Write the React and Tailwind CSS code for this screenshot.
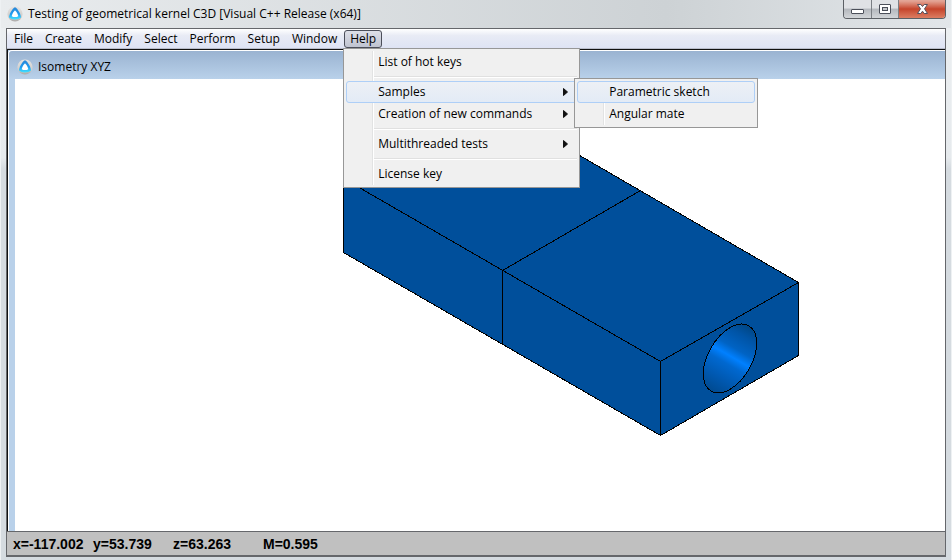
import React from "react";

const menus = ["File", "Create", "Modify", "Select", "Perform", "Setup", "Window"];

const helpGroups = [
    [{ label: "List of hot keys" }],
    [
        {
            label: "Samples",
            active: true,
            children: [{ label: "Parametric sketch", active: true }, { label: "Angular mate" }],
        },
        { label: "Creation of new commands", arrow: true },
    ],
    [{ label: "Multithreaded tests", arrow: true }],
    [{ label: "License key" }],
];

function Logo({ id }) {
    return (
        <svg width="16" height="16" viewBox="0 0 16 16" className="shrink-0">
            <defs>
                <linearGradient id={`${id}-disc`} x1="0" y1="0" x2="0" y2="1">
                    <stop offset="0" stopColor="#e6e4e2" />
                    <stop offset="0.7" stopColor="#cfcdcb" />
                    <stop offset="1" stopColor="#a9a7a6" />
                </linearGradient>
                <linearGradient id={`${id}-tri`} x1="0" y1="0" x2="0" y2="1">
                    <stop offset="0" stopColor="#2a86d6" />
                    <stop offset="0.55" stopColor="#1e9bf0" />
                    <stop offset="1" stopColor="#45e4ff" />
                </linearGradient>
            </defs>
            <circle cx="8" cy="8" r="7.6" fill={`url(#${id}-disc)`} />
            <path d="M8 1.2C10.6 2.2 14.2 8.6 14 11.6C11.4 14.2 4.6 14.2 2 11.6C1.8 8.6 5.4 2.2 8 1.2Z" fill={`url(#${id}-tri)`} />
            <path d="M8 4.6C9.2 5.2 11.2 8.6 11.2 10.2C9.6 11.4 6.4 11.4 4.8 10.2C4.8 8.6 6.8 5.2 8 4.6Z" fill="#fff" />
        </svg>
    );
}

function WindowButtons() {
    return (
        <div className="flex h-[19px] overflow-hidden rounded-b border border-t-0 border-[#5c6065]">
            <button aria-label="Minimize" className="flex w-[28px] items-center justify-center border-r border-[#7b7f84] bg-linear-to-b from-[#e0e2e5] from-45% via-[#b4b8bd] via-50% to-[#d2d5d8]">
                <svg width="13" height="13" viewBox="0 0 13 13">
                    <rect x="0.5" y="6.5" width="12" height="4" rx="0.5" fill="#fff" stroke="#4b4f59" />
                </svg>
            </button>
            <button aria-label="Restore" className="flex w-[27px] items-center justify-center border-r border-[#7b7f84] bg-linear-to-b from-[#e0e2e5] from-45% via-[#b4b8bd] via-50% to-[#d2d5d8]">
                <svg width="13" height="13" viewBox="0 0 13 13">
                    <rect x="0.5" y="1.5" width="11" height="9" rx="0.5" fill="#fff" stroke="#4b4f59" />
                    <rect x="3.5" y="4.5" width="5" height="3" fill="#c4c7cb" stroke="#4b4f59" />
                </svg>
            </button>
            <button aria-label="Close" className="flex w-[46px] items-center justify-center bg-linear-to-b from-[#e3a596] from-5% via-[#c5442b] via-50% to-[#dc7d62]">
                <svg width="13" height="13" viewBox="0 0 13 13">
                    <path d="M1.5 1.5H4.8L6.5 3.5L8.2 1.5H11.5L8.5 5.8L11.5 10.5H8.2L6.5 8.2L4.8 10.5H1.5L4.5 5.8Z" fill="#fff" stroke="#53505c" />
                </svg>
            </button>
        </div>
    );
}

function MenuItem({ item }) {
    return (
        <li className="relative">
            <button
                className={`flex h-[22px] w-full items-center rounded-[3px] border pl-[31px] text-left ${
                    item.active ? "border-[#aecff7] bg-linear-to-b from-[#edf0f5] to-[#e3ebf6]" : "border-transparent"
                }`}
            >
                <span className="grow">{item.label}</span>
                {(item.arrow || item.children) && (
                    <svg width="5" height="8" viewBox="0 0 5 8" className="mr-[8px]">
                        <path d="M0.5 0.5L4.5 4L0.5 7.5Z" fill="#111" stroke="#111" />
                    </svg>
                )}
            </button>
            {item.children && <Menu groups={[item.children]} className="-top-[3px] left-[228px] w-[184px]" />}
        </li>
    );
}

function Menu({ groups, className }) {
    return (
        <div className={`absolute z-10 border border-[#979797] bg-[#f0f0f0] p-[2px] ${className}`}>
            <div className="bg-[linear-gradient(90deg,transparent_26px,#e2e3e3_26px,#e2e3e3_27px,#fff_27px,#fff_28px,transparent_28px)]">
                {groups.map((group, i) => (
                    <ul key={i}>
                        {i > 0 && <li className="my-[3px] ml-[28px] h-[2px] border-t border-b border-t-[#e0e0e0] border-b-white" />}
                        {group.map((item) => (
                            <MenuItem key={item.label} item={item} />
                        ))}
                    </ul>
                ))}
            </div>
        </div>
    );
}

// isometric view of the two joined blocks with the through hole
function Model() {
    return (
        <svg width="930" height="452" viewBox="15 79 930 452" className="block shrink-0" shapeRendering="crispEdges">
            <defs>
                <linearGradient id="hole">
                    <stop offset="0" stopColor="#004a90" />
                    <stop offset="0.22" stopColor="#0059b2" />
                    <stop offset="0.42" stopColor="#0068d0" />
                    <stop offset="0.53" stopColor="#0080ff" />
                    <stop offset="0.65" stopColor="#0063c4" />
                    <stop offset="0.85" stopColor="#0054a6" />
                    <stop offset="1" stopColor="#004684" />
                </linearGradient>
            </defs>
            <g stroke="#000" strokeWidth="1" strokeLinejoin="round">
                <path d="M343.5 178.5L481.5 98.5L798.5 282.5V355.5L660.5 435.5L343.5 252.5Z" fill="#004f9b" />
                <path d="M343.5 178.5L660.5 361.5L798.5 282.5M660.5 361.5V435.5M640.5 190.5L502.5 270.5V343.5" fill="none" />
                <ellipse rx="37.7" ry="21.8" transform="translate(730 358.5) rotate(-60)" fill="url(#hole)" />
            </g>
        </svg>
    );
}

export default function App() {
    return (
        <div className="flex min-h-screen flex-col border border-[#eef1f3] bg-[#d5dbe0] bg-linear-to-b from-[#edf0f2] from-0% via-[#e6eaed] via-28% to-[#d5dbe0] to-30% px-[5px] pb-[3px] font-['Open_Sans','Noto_Sans',sans-serif] text-[12px] leading-[16px] text-black">
            <header className="-mx-[5px] -mt-px flex h-[28px] items-start justify-between bg-linear-to-r from-[#e9ecee] via-[#cdd2d5] via-70% to-[#e2e6e9] pr-[5px] pl-[6px]">
                <div className="flex items-center gap-[5px] pt-[6px]">
                    <Logo id="app" />
                    <h1>Testing of geometrical kernel C3D [Visual C++ Release (x64)]</h1>
                </div>
                <WindowButtons />
            </header>

            <div className="flex grow flex-col border border-b-2 border-[#65676b]">
                <nav className="flex h-[20px] items-center border-b border-[#b9bdcb] bg-linear-to-b from-white from-0% via-[#e8ebf5] via-35% to-[#dee3f4] pl-px">
                    {menus.map((menu) => (
                        <button key={menu} className="px-[6px]">
                            {menu}
                        </button>
                    ))}
                    <div className="relative pl-px">
                        <button className="flex h-[18px] items-center rounded-[3px] border border-[#4b4e59] bg-linear-to-b from-[#dddfe7] to-[#bfc3d0] px-[5px]">Help</button>
                        <Menu groups={helpGroups} className="top-[18px] left-0 w-[237px]" />
                    </div>
                </nav>

                <main className="flex grow flex-col border-t border-l border-[#111] bg-[#b9d1ea]">
                    <div className="flex h-[29px] items-center gap-[5px] rounded-tl border-t border-l border-white bg-linear-to-b from-[#9ab3d1] to-[#b9d1ea] pt-[4px] pl-[8px]">
                        <Logo id="doc" />
                        <h2>Isometry XYZ</h2>
                    </div>
                    <div className="flex grow border-l border-white bg-[#b9d1ea] pl-[6px]">
                        <div className="flex min-w-0 grow overflow-hidden bg-white">
                            <Model />
                        </div>
                    </div>
                </main>

                <footer className="flex h-[24px] items-center border-t border-[#65676b] bg-[#c0c0c0] pl-[6px] font-['Liberation_Sans',Arial,sans-serif] text-[14px] font-bold">
                    <span className="w-[80px]">x=-117.002</span>
                    <span className="w-[80px]">y=53.739</span>
                    <span className="w-[90px]">z=63.263</span>
                    <span>M=0.595</span>
                </footer>
            </div>
        </div>
    );
}
